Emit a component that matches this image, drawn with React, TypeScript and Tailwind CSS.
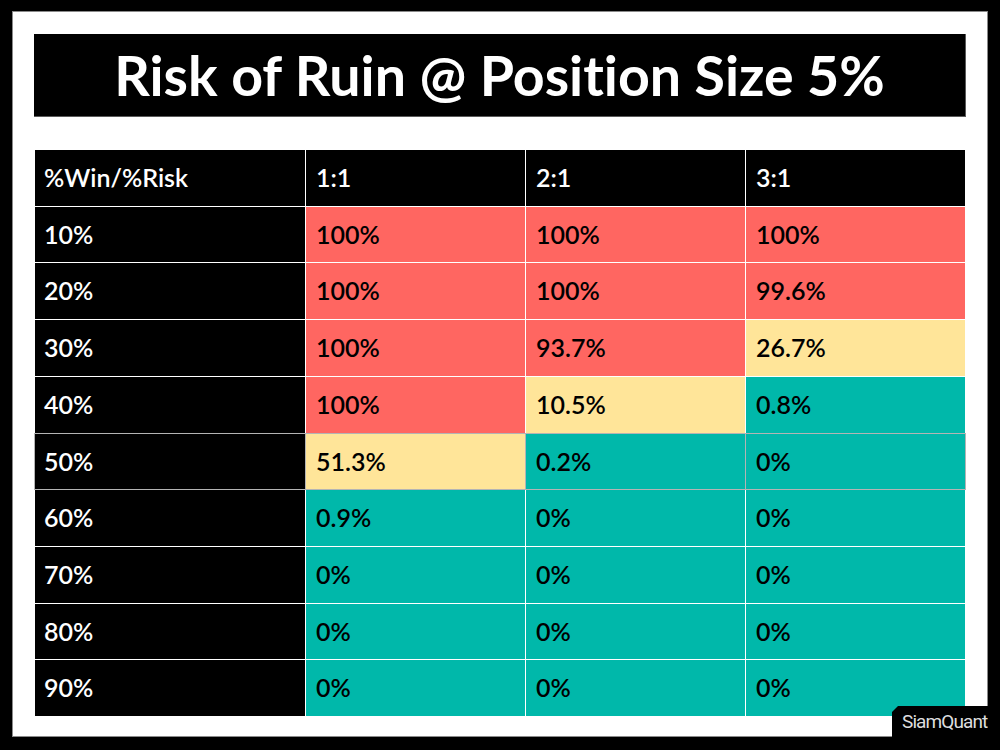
import React from "react";

const R = "bg-[#ff6661]";
const Y = "bg-[#ffe599]";
const T = "bg-[#00b8aa]";

type Cell = [string, string];
const rows: { label: string; cells: Cell[]; hl?: boolean }[] = [
  { label: "10%", cells: [["100%", R], ["100%", R], ["100%", R]] },
  { label: "20%", cells: [["100%", R], ["100%", R], ["99.6%", R]] },
  { label: "30%", cells: [["100%", R], ["93.7%", R], ["26.7%", Y]] },
  { label: "40%", cells: [["100%", R], ["10.5%", Y], ["0.8%", T]] },
  { label: "50%", cells: [["51.3%", Y], ["0.2%", T], ["0%", T]], hl: true },
  { label: "60%", cells: [["0.9%", T], ["0%", T], ["0%", T]] },
  { label: "70%", cells: [["0%", T], ["0%", T], ["0%", T]] },
  { label: "80%", cells: [["0%", T], ["0%", T], ["0%", T]] },
  { label: "90%", cells: [["0%", T], ["0%", T], ["0%", T]] },
];

export default function App() {
  const font = { fontFamily: "Lato, 'Noto Sans', sans-serif" };
  return (
    <div className="w-[1000px] h-[750px] bg-black pt-[11px] pl-[12px] pr-[12px] pb-[13px] relative [font-variant-ligatures:none]" style={font}>
      <div className="w-full h-full bg-white border border-[#8a8a8a] pt-[22px] pl-[21px] pr-[20px] flex flex-col">
        <div className="w-[932px] h-[83px] bg-black border-b border-r border-[#5a5a5a] flex items-center justify-center">
          <span className="text-white text-[55.5px] font-bold leading-none">Risk of Ruin @ Position Size 5%</span>
        </div>
        <div className="mt-[33px] ml-[1px] w-[930px] h-[566px] bg-white grid grid-cols-[270px_219px_219px_219px] grid-rows-[repeat(10,1fr)] gap-[1px] text-[25px] font-semibold">
          <div className="bg-black text-white flex items-center pl-[9px]">%Win/%Risk</div>
          <div className="bg-black text-white flex items-center pl-[10px]">1:1</div>
          <div className="bg-black text-white flex items-center pl-[10px]">2:1</div>
          <div className="bg-black text-white flex items-center pl-[10px]">3:1</div>
          {rows.map((r) => (
            <React.Fragment key={r.label}>
              <div className={`bg-black text-white flex items-center pl-[9px] ${r.hl ? "shadow-[0_0_0_1px_#b4b4b4]" : ""}`}>{r.label}</div>
              {r.cells.map(([v, c], i) => (
                <div key={i} className={`${c} text-black flex items-center pl-[10px] ${r.hl ? "shadow-[0_0_0_1px_#b4b4b4]" : ""}`}>{v}</div>
              ))}
            </React.Fragment>
          ))}
        </div>
      </div>
      <div
        className="absolute left-[892px] top-[706px] w-[96px] h-[31px] bg-black overflow-hidden flex items-center pl-[10px]"
        style={{ clipPath: "polygon(6px 0, 100% 0, 100% 100%, 0 100%, 0 6px)" }}
      >
        <span className="text-[#dedede] text-[19px] leading-none tracking-[-0.9px] whitespace-nowrap" style={{ fontFamily: "Roboto, 'Liberation Sans', sans-serif" }}>SiamQuant</span>
      </div>
    </div>
  );
}
